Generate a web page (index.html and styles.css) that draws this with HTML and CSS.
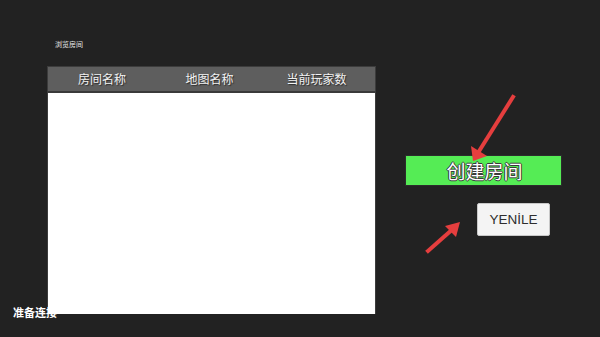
FILE: index.html
```html
<!DOCTYPE html>
<html lang="zh">
<head>
    <meta charset="UTF-8">
    <meta name="viewport" content="width=device-width, initial-scale=1.0">
    <title>浏览房间</title>
    <link rel="stylesheet" href="styles.css">
</head>
<body>
    <div class="screen">
        <div class="lobby">
            <div class="title">浏览房间</div>
            <div class="room-table">
                <div class="room-head">
                    <span>房间名称</span>
                    <span>地图名称</span>
                    <span>当前玩家数</span>
                </div>
                <div class="room-list"></div>
            </div>
        </div>

        <div class="actions">
            <button class="btn-create">创建房间</button>
            <button class="btn-refresh">YENİLE</button>
        </div>

        <div class="status">准备连接</div>

        <!-- 标注箭头 -->
        <svg class="arrows" width="600" height="337" viewBox="0 0 600 337">
            <g stroke="#e53e3e" stroke-width="4" stroke-linecap="square" fill="none">
                <line x1="513" y1="97" x2="476" y2="156"/>
                <line x1="428" y1="251" x2="455" y2="227"/>
            </g>
            <g fill="#e53e3e">
                <polygon points="473,161 471,146 487,156"/>
                <polygon points="460,222 445,226 456,237"/>
            </g>
        </svg>
    </div>
</body>
</html>
```

FILE: styles.css
```css
body {
    margin: 0;
    background: #222222;
    font-family: 'Noto Sans CJK SC', 'Noto Sans', sans-serif;
}

.screen {
    position: relative;
    width: 600px;
    height: 337px;
    display: flex;
    align-items: flex-start;
    padding: 39px 0 0 47px;
    box-sizing: border-box;
    overflow: hidden;
}

.lobby {
    display: flex;
    flex-direction: column;
}

.title {
    margin-left: 8px;
    height: 10px;
    line-height: 10px;
    font-size: 7px;
    color: #e6e6e6;
    margin-bottom: 17px;
}

.room-table {
    width: 327px;
    border: 1px solid #3c3c3c;
    border-bottom: none;
    display: flex;
    flex-direction: column;
}

.room-head {
    height: 24px;
    background: #5e5e5e;
    border-bottom: 2px solid #3a3a3a;
    display: grid;
    grid-template-columns: 108px 107px 107px;
    align-items: center;
    justify-items: center;
    color: #f2f2f2;
    font-size: 12px;
    line-height: 24px;
    text-shadow: 1px 1px 1px rgba(0,0,0,0.55);
}

.room-list {
    height: 221px;
    background: #ffffff;
}

.actions {
    margin-left: 29px;
    padding-top: 116px;
    display: flex;
    flex-direction: column;
    align-items: flex-start;
    gap: 17px;
}

.btn-create {
    width: 157px;
    height: 31px;
    border: 1px solid #2c2c2c;
    background: #55ec55;
    color: #ffffff;
    font-family: 'Noto Sans CJK SC', sans-serif;
    font-size: 19px;
    line-height: 27px;
    padding: 0 0 0 2px;
    text-shadow: 1px 0 0 #3a3a3a, -1px 0 0 #3a3a3a, 0 1px 0 #3a3a3a, 0 -1px 0 #3a3a3a;
}

.btn-refresh {
    margin-left: 72px;
    width: 73px;
    height: 33px;
    border: 1px solid #c8c8c8;
    border-radius: 2px;
    background: #f4f4f4;
    color: #2e2e2e;
    font-family: 'Liberation Sans', Arial, sans-serif;
    font-size: 13.5px;
    padding: 0;
}

.status {
    position: absolute;
    left: 13px;
    top: 305px;
    font-size: 11px;
    line-height: 15px;
    font-weight: bold;
    color: #ffffff;
}

.arrows {
    position: absolute;
    left: 0;
    top: 0;
    pointer-events: none;
}
```
